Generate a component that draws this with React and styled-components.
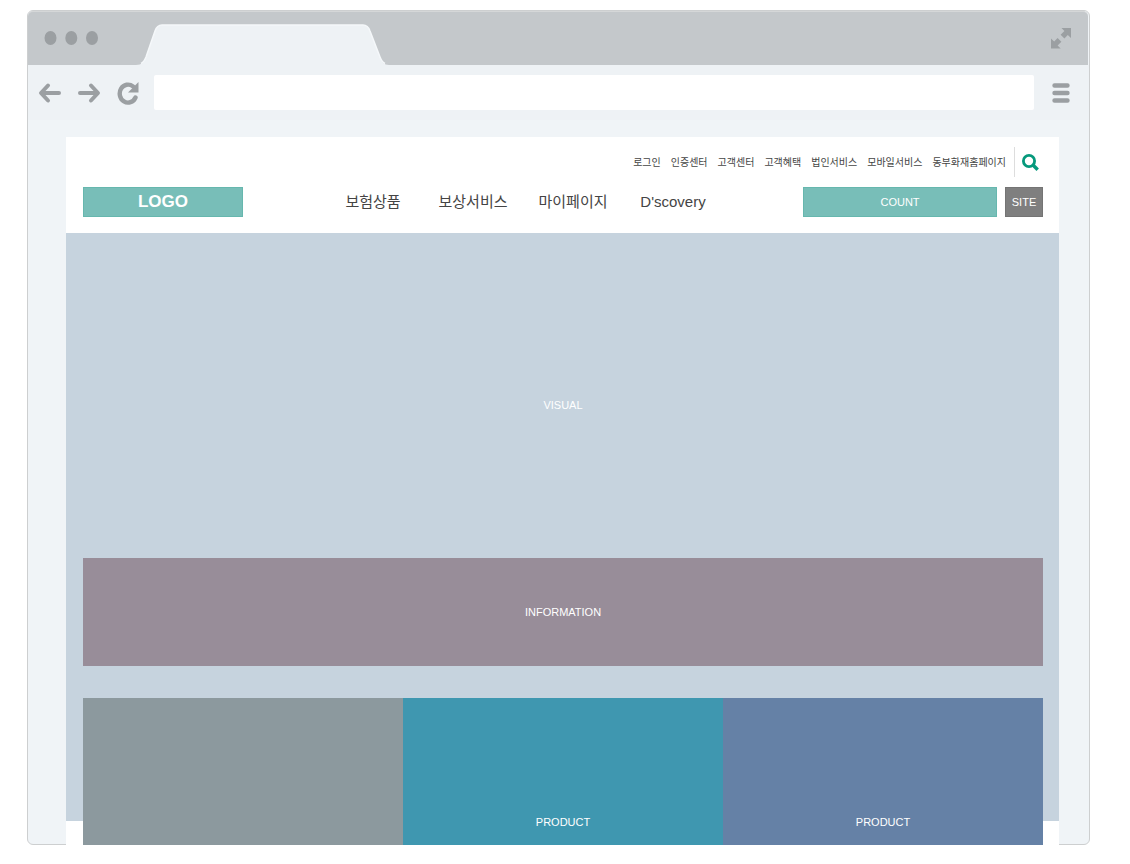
import React from "react";
import styled, { createGlobalStyle } from "styled-components";

const GlobalStyle = createGlobalStyle`
  *, *::before, *::after { box-sizing: border-box; }
  body {
    margin: 0;
    background: #fff;
    color: #444;
    font-family: "Liberation Sans", "Noto Sans CJK KR", sans-serif;
  }
  button, input { font: inherit; }
  a { color: inherit; text-decoration: none; }
`;

const BrowserFrame = styled.div`
  margin: 10px 40px 19px 27px;
  border: 1px solid #cdcfd0;
  border-radius: 6px;
  background: #f0f4f7;
`;

const TabBar = styled.div`
  display: flex;
  align-items: flex-end;
  height: 54px;
  margin-right: 1px;
  padding: 0 15px 0 16px;
  border-top: 1px solid #d5d7d8;
  border-radius: 5px 5px 0 0;
  background: #c4c8cb;
`;

const WindowDots = styled.svg`
  width: 55px;
  height: 16px;
  margin-bottom: 19px;
`;

const Tab = styled.svg`
  width: 256px;
  height: 42px;
  margin: 0 auto 0 35px;
`;

const IconButton = styled.button`
  display: flex;
  flex: none;
  padding: 0;
  border: 0;
  background: none;
  color: #9b9fa2;
  cursor: pointer;
`;

const ExpandButton = styled(IconButton)`
  margin-bottom: 15px;
`;

const Toolbar = styled.div`
  display: flex;
  align-items: center;
  height: 55px;
  padding: 0 18px 0 10px;
  background: #eef2f5;
`;

const ToolbarButtons = styled.div`
  display: flex;
  gap: 15px;
  margin-right: 14px;
`;

const AddressInput = styled.input`
  flex: 1;
  min-width: 0;
  height: 35px;
  margin-right: 17px;
  padding: 0 12px;
  border: 0;
  border-radius: 2px;
  background: #fff;
`;

const Viewport = styled.div`
  padding: 17px 30px 0 38px;
`;

const Page = styled.div`
  margin-bottom: -1px;
  padding-bottom: 24px;
  background: #fff;
`;

const Header = styled.header`
  padding: 10px 16px 16px 17px;
`;

const UtilityRow = styled.div`
  display: flex;
  align-items: center;
  justify-content: flex-end;
  height: 30px;
  margin-bottom: 10px;
  padding-right: 4px;
`;

const UtilityNav = styled.nav`
  display: flex;
  gap: 10px;
  padding-top: 2px;
  font-size: 10px;
  line-height: 16px;
  white-space: nowrap;
`;

const SearchButton = styled(IconButton)`
  align-items: center;
  height: 30px;
  margin-left: 8px;
  padding-left: 7px;
  border-left: 1px solid #ddd;
  color: #06997c;
`;

const MainRow = styled.div`
  display: flex;
  align-items: stretch;
  height: 30px;
`;

const Logo = styled.a`
  display: flex;
  align-items: center;
  justify-content: center;
  width: 160px;
  border: 1px solid #66b7ae;
  background: #78beb8;
  color: #fff;
  font-size: 17px;
  font-weight: 700;
`;

const MainNav = styled.nav`
  display: grid;
  grid-template-columns: repeat(4, 100px);
  align-items: center;
  margin: 0 auto;
  font-size: 15px;
  line-height: 20px;
  text-align: center;
  white-space: nowrap;
`;

const BlockButton = styled.button`
  width: ${(p) => p.$width};
  margin-left: ${(p) => p.$gap || "0"};
  padding: 0;
  border: 1px solid ${(p) => p.$edge};
  background: ${(p) => p.$fill};
  color: #fff;
  font-size: 11px;
  cursor: pointer;
`;

const Stage = styled.main`
  display: flow-root;
  padding: 0 16px 0 17px;
  background: #c6d3de;
`;

const BlockTitle = styled.h2`
  margin: 0;
  color: #fff;
  font-size: 11px;
  font-weight: 400;
  line-height: 16px;
  text-align: center;
`;

const Visual = styled.section`
  height: 325px;
  padding-top: 164px;
`;

const Information = styled.section`
  display: grid;
  place-items: center;
  height: 108px;
  margin-bottom: 32px;
  background: #988d99;
`;

const Products = styled.section`
  display: grid;
  grid-template-columns: repeat(3, 1fr);
  height: 147px;
  margin-bottom: -24px;
`;

const Product = styled.article`
  display: flex;
  align-items: flex-end;
  justify-content: center;
  padding-bottom: 15px;
  background: ${(p) => p.$fill};
`;

const utilityLinks = [
  "로그인",
  "인증센터",
  "고객센터",
  "고객혜택",
  "법인서비스",
  "모바일서비스",
  "동부화재홈페이지",
];
const mainLinks = ["보험상품", "보상서비스", "마이페이지", "D'scovery"];
const products = [
  { fill: "#8c999e", title: "" },
  { fill: "#3f97b0", title: "PRODUCT" },
  { fill: "#6581a6", title: "PRODUCT" },
];

const ArrowIcon = ({ right }) => (
  <svg width="24" height="24" viewBox="0 0 24 24" fill="none" stroke="currentColor" strokeWidth="4" strokeLinecap="round" strokeLinejoin="round">
    <path d={right ? "M3 12H20M14 4.5L21 12L14 19.5" : "M21 12H4M10 4.5L3 12L10 19.5"} />
  </svg>
);

const ReloadIcon = () => (
  <svg width="24" height="24" viewBox="0 0 24 24">
    <path d="M19.5 16.5A8.3 9 0 1 1 17 5.4" fill="none" stroke="currentColor" strokeWidth="4.4" strokeLinecap="round" />
    <path d="M22.5 1V11.5H12Z" fill="currentColor" />
  </svg>
);

const ExpandIcon = () => (
  <svg width="24" height="24" viewBox="0 0 24 24" fill="currentColor">
    <path d="M12.5 2H22V12L18.8 9L15.4 12.5L11.6 8.8L15.4 5ZM2 12.5L5.2 15.5L8.6 12L12.4 15.7L8.6 19.5L11.7 22.5H2Z" />
  </svg>
);

const MenuIcon = () => (
  <svg width="20" height="22" viewBox="0 0 20 22" stroke="currentColor" strokeWidth="4.4" strokeLinecap="round">
    <path d="M3.5 3.5H16.5M3.5 11H16.5M3.5 18.5H16.5" />
  </svg>
);

const SearchIcon = () => (
  <svg width="17" height="17" viewBox="0 0 17 17" fill="none" stroke="currentColor">
    <circle cx="7" cy="7" r="5.6" strokeWidth="2.8" />
    <path d="M11 11L15.7 15.7" strokeWidth="3.4" />
  </svg>
);

export default function App() {
  return (
    <>
      <GlobalStyle />
      <BrowserFrame>
        <TabBar>
          <WindowDots viewBox="0 0 55 16" fill="#9b9fa2" aria-hidden="true">
            <ellipse cx="6.5" cy="8" rx="6" ry="7" />
            <ellipse cx="27.3" cy="8" rx="6" ry="7" />
            <ellipse cx="48" cy="8" rx="6" ry="7" />
          </WindowDots>
          <Tab viewBox="0 0 256 42" aria-hidden="true">
            <path d="M2 42C8 42 10 39 12 34L21 8Q23 2 28 2H229Q234 2 236 8L246 34C248 39 250 42 255 42Z" fill="#eef2f5" />
            <path d="M7 40.5Q10 39 12 34L21 8Q23 2 28 2H229Q234 2 236 8L246 34Q248 39 251 40.5" fill="none" stroke="#f5f8fa" strokeWidth="1.5" />
          </Tab>
          <ExpandButton type="button" aria-label="Expand window">
            <ExpandIcon />
          </ExpandButton>
        </TabBar>
        <Toolbar>
          <ToolbarButtons>
            <IconButton type="button" aria-label="Back"><ArrowIcon /></IconButton>
            <IconButton type="button" aria-label="Forward"><ArrowIcon right /></IconButton>
            <IconButton type="button" aria-label="Reload"><ReloadIcon /></IconButton>
          </ToolbarButtons>
          <AddressInput type="text" aria-label="Address" />
          <IconButton type="button" aria-label="Menu"><MenuIcon /></IconButton>
        </Toolbar>
        <Viewport>
          <Page>
            <Header>
              <UtilityRow>
                <UtilityNav>
                  {utilityLinks.map((label) => (
                    <a key={label} href="#">{label}</a>
                  ))}
                </UtilityNav>
                <SearchButton type="button" aria-label="Search"><SearchIcon /></SearchButton>
              </UtilityRow>
              <MainRow>
                <Logo href="#">LOGO</Logo>
                <MainNav>
                  {mainLinks.map((label) => (
                    <a key={label} href="#">{label}</a>
                  ))}
                </MainNav>
                <BlockButton type="button" $width="194px" $fill="#78beb8" $edge="#66b7ae">COUNT</BlockButton>
                <BlockButton type="button" $width="38px" $gap="8px" $fill="#7f7f7f" $edge="#747474">SITE</BlockButton>
              </MainRow>
            </Header>
            <Stage>
              <Visual><BlockTitle>VISUAL</BlockTitle></Visual>
              <Information><BlockTitle>INFORMATION</BlockTitle></Information>
              <Products>
                {products.map((item) => (
                  <Product key={item.fill} $fill={item.fill}>
                    {item.title && <BlockTitle>{item.title}</BlockTitle>}
                  </Product>
                ))}
              </Products>
            </Stage>
          </Page>
        </Viewport>
      </BrowserFrame>
    </>
  );
}
